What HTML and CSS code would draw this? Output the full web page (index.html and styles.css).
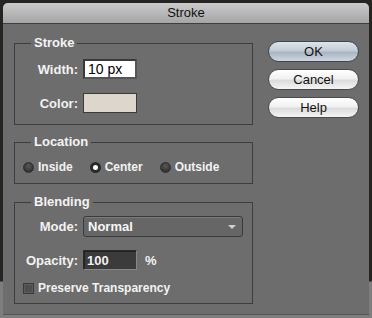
FILE: index.html
```html
<!DOCTYPE html>
<html lang="en">
<head>
    <meta charset="UTF-8">
    <title>Stroke</title>
    <link rel="stylesheet" href="styles.css">
</head>
<body>
    <div class="dialog">
        <div class="titlebar">Stroke</div>

        <div class="content">
            <div class="groups">
                <fieldset class="group stroke">
                    <legend>Stroke</legend>
                    <div class="row">
                        <label for="width">Width:</label>
                        <input type="text" id="width" class="field light" value="10 px">
                    </div>
                    <div class="row">
                        <label>Color:</label>
                        <div class="swatch"></div>
                    </div>
                </fieldset>

                <fieldset class="group location">
                    <legend>Location</legend>
                    <div class="radios">
                        <label class="radio"><span class="dot"></span>Inside</label>
                        <label class="radio"><span class="dot checked"></span>Center</label>
                        <label class="radio"><span class="dot"></span>Outside</label>
                    </div>
                </fieldset>

                <fieldset class="group blending">
                    <legend>Blending</legend>
                    <div class="row">
                        <label>Mode:</label>
                        <div class="select">
                            <span>Normal</span>
                            <span class="arrow"></span>
                        </div>
                    </div>
                    <div class="row opacity">
                        <label for="opacity">Opacity:</label>
                        <input type="text" id="opacity" class="field dark" value="100">
                        <span class="unit">%</span>
                    </div>
                    <label class="check"><span class="box"></span>Preserve Transparency</label>
                </fieldset>
            </div>

            <div class="buttons">
                <button class="btn default">OK</button>
                <button class="btn">Cancel</button>
                <button class="btn">Help</button>
            </div>
        </div>
    </div>
</body>
</html>
```

FILE: styles.css
```css
body {
    margin: 0;
    width: 372px;
    height: 318px;
    overflow: hidden;
    background: linear-gradient(to bottom, #262522 0, #262522 281px, #7e7e7e 282px);
    font-family: "Liberation Sans", Arial, sans-serif;
}

.dialog {
    margin: 3px 0 0 3px;
    width: 366px;
    height: 311px;
    background: #6d6d6d;
    border-radius: 5px 5px 0 0;
    box-shadow: 0 1px 0 #555;
}

.titlebar {
    height: 20px;
    line-height: 20px;
    text-align: center;
    font-size: 13px;
    color: #111;
    background: linear-gradient(to bottom, #cbcbcb, #a5a5a5);
    border-bottom: 1px solid #3e3e3e;
    border-radius: 5px 5px 0 0;
}

.content {
    display: flex;
    padding: 11px 10px 0 11px;
}

.groups {
    display: flex;
    flex-direction: column;
    width: 239px;
}

.group {
    margin: 0;
    border: 1px solid #3d3d3d;
    padding: 0 9px 0 8px;
    min-width: 0;
}

.group legend {
    margin-left: 8px;
    padding: 0 3px;
    font-size: 13px;
    line-height: 16px;
    font-weight: bold;
    color: #f4f4f4;
}

.stroke {
    padding-top: 8px;
    padding-bottom: 11px;
}

.location {
    margin-top: 9px;
    padding-top: 10px;
    padding-bottom: 9px;
}

.blending {
    margin-top: 10px;
    padding-top: 6px;
    padding-bottom: 8px;
}

.row {
    display: flex;
    align-items: center;
}

.row + .row {
    margin-top: 13px;
}

.stroke .row + .row {
    margin-top: 14px;
}

.row label {
    width: 55px;
    text-align: right;
    margin-right: 5px;
    font-size: 13px;
    font-weight: bold;
    color: #f2f2f2;
}

.field {
    box-sizing: border-box;
    width: 54px;
    height: 20px;
    margin: 0;
    padding: 0 3px;
    font-family: "Liberation Sans", Arial, sans-serif;
    outline: none;
}

.field.light {
    background: #fff;
    border: 2px solid #3a3a3a;
    border-right-color: #555;
    border-bottom-color: #555;
    font-size: 14px;
    color: #000;
}

.field.dark {
    background: #3b3b3b;
    border: 1px solid #2a2a2a;
    border-right-color: #888;
    border-bottom-color: #888;
    box-shadow: inset 1px 1px 0 #222;
    font-size: 13px;
    font-weight: bold;
    color: #f2f2f2;
}

.swatch {
    width: 52px;
    height: 18px;
    background: #ddd6cc;
    border: 1px solid #3a3a3a;
}

.unit {
    margin-left: 8px;
    font-size: 13px;
    font-weight: bold;
    color: #f2f2f2;
}

.select {
    box-sizing: border-box;
    width: 160px;
    height: 21px;
    display: flex;
    align-items: center;
    justify-content: space-between;
    padding: 0 6px 0 4px;
    background: #666;
    border: 1px solid #3a3a3a;
    border-radius: 3px;
    box-shadow: inset 0 1px 0 #7a7a7a;
    font-size: 13px;
    font-weight: bold;
    color: #f6f6f6;
}

.arrow {
    width: 0;
    height: 0;
    border-left: 4px solid transparent;
    border-right: 4px solid transparent;
    border-top: 4px solid #d0d0d0;
}

.radios {
    display: flex;
    gap: 17px;
    height: 14px;
    align-items: center;
}

.radio, .check {
    display: flex;
    align-items: center;
    gap: 4px;
    font-size: 12px;
    font-weight: bold;
    color: #f2f2f2;
}

.dot {
    box-sizing: border-box;
    width: 11px;
    height: 11px;
    border-radius: 50%;
    background: radial-gradient(circle at 50% 35%, #5a5a5a, #333 70%);
    border: 1px solid #2e2e2e;
}

.dot.checked {
    background: #fff;
    border: 3px solid #2a2a2a;
}

.check {
    margin-top: 11px;
    height: 14px;
}

.box {
    box-sizing: border-box;
    width: 11px;
    height: 11px;
    background: #4e4e4e;
    border: 1px solid #3a3a3a;
    box-shadow: inset 0 0 0 1px #5c5c5c;
}

.buttons {
    display: flex;
    flex-direction: column;
    gap: 7px;
    margin-left: 15px;
    padding-top: 6px;
}

.btn {
    width: 91px;
    height: 21px;
    padding: 0;
    border: 1px solid #4a4a4a;
    border-radius: 11px;
    background: linear-gradient(to bottom, #ffffff 0%, #f1f1f1 45%, #dcdcdc 55%, #f4f4f4 100%);
    font-family: "Liberation Sans", Arial, sans-serif;
    font-size: 13px;
    color: #111;
}

.btn.default {
    border-color: #3c4656;
    background: linear-gradient(to bottom, #dfe4ea 0%, #c4ccd6 45%, #aab5c3 55%, #cfd7e0 100%);
}
```
